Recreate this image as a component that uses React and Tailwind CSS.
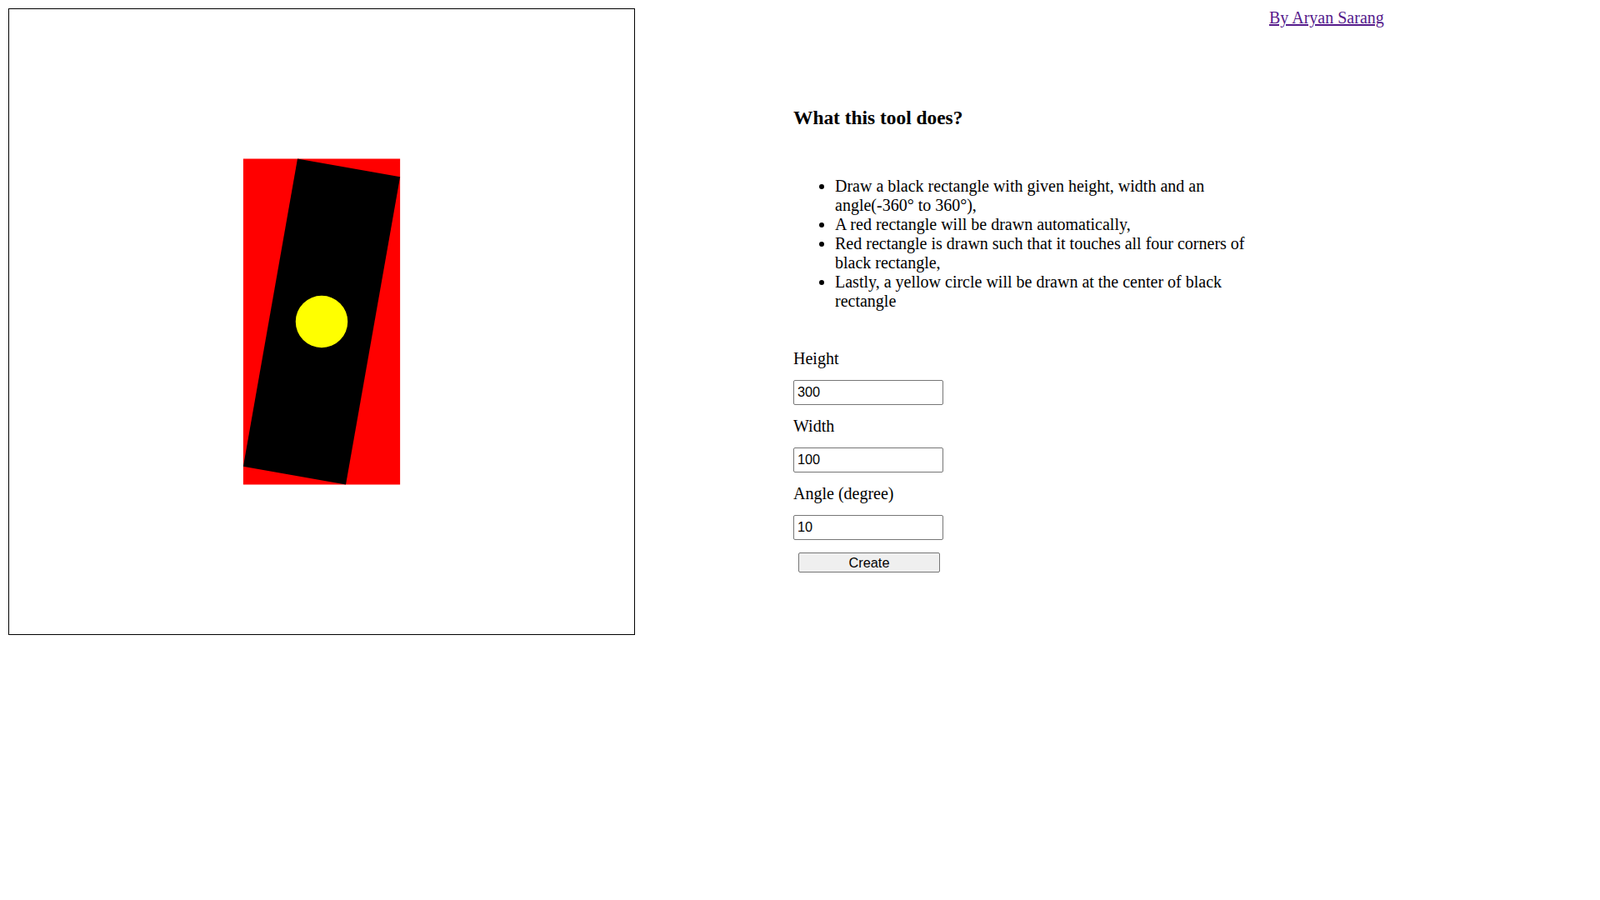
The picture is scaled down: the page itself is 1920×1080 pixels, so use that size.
import React from "react";

const serif = { fontFamily: '"Liberation Serif", "Times New Roman", serif' };
const sans = { fontFamily: '"Liberation Sans", Arial, sans-serif' };

const Field = ({ label, value, top }) => (
  <div className={top}>
    <div className="text-[20px] leading-[23px] text-black">{label}</div>
    <input
      defaultValue={value}
      className="mt-[13.5px] block w-[180px] h-[30.5px] border border-[#767676] rounded-[2px] px-[4px] text-[16.3px] text-black bg-white outline-none"
      style={sans}
    />
  </div>
);

const Canvas = () => {
  // 600x600 canvas shown at 125%
  const c = 375;
  const w = 125;
  const h = 375;
  const a = (10 * Math.PI) / 180;
  const bw = w * Math.cos(a) + h * Math.sin(a);
  const bh = h * Math.cos(a) + w * Math.sin(a);
  return (
    <div className="w-[752px] h-[752px] border border-black shrink-0">
      <svg width="750" height="750" viewBox="0 0 750 750" className="block">
        <rect x={c - bw / 2} y={c - bh / 2} width={bw} height={bh} fill="#ff0000" />
        <rect
          x={c - w / 2}
          y={c - h / 2}
          width={w}
          height={h}
          fill="#000000"
          transform={`rotate(10 ${c} ${c})`}
        />
        <circle cx={c} cy={c} r="31.25" fill="#ffff00" />
      </svg>
    </div>
  );
};

export default function App() {
  return (
    <div className="bg-white min-h-screen p-[10px] flex items-start text-black" style={serif}>
      <Canvas />

      <div className="ml-[190px] w-[560px] shrink-0">
        <h3 className="mt-[118px] text-[23.4px] leading-[27px] font-bold">What this tool does?</h3>
        <ul className="mt-[57px] list-disc pl-[50px] text-[20px] leading-[23px]">
          <li>Draw a black rectangle with given height, width and an angle(-360° to 360°),</li>
          <li>A red rectangle will be drawn automatically,</li>
          <li>Red rectangle is drawn such that it touches all four corners of black rectangle,</li>
          <li>Lastly, a yellow circle will be drawn at the center of black rectangle</li>
        </ul>

        <Field label="Height" value="300" top="mt-[46px]" />
        <Field label="Width" value="100" top="mt-[14px]" />
        <Field label="Angle (degree)" value="10" top="mt-[14px]" />

        <button
          className="mt-[14.5px] ml-[6px] block w-[170px] h-[24.5px] bg-[#efefef] border border-[#767676] rounded-[2px] text-[16.3px] leading-none text-black"
          style={sans}
        >
          Create
        </button>
      </div>

      <a href="#" className="ml-[11px] text-[20px] leading-[23px] text-[#551a8b] underline whitespace-nowrap">
        By Aryan Sarang
      </a>
    </div>
  );
}
